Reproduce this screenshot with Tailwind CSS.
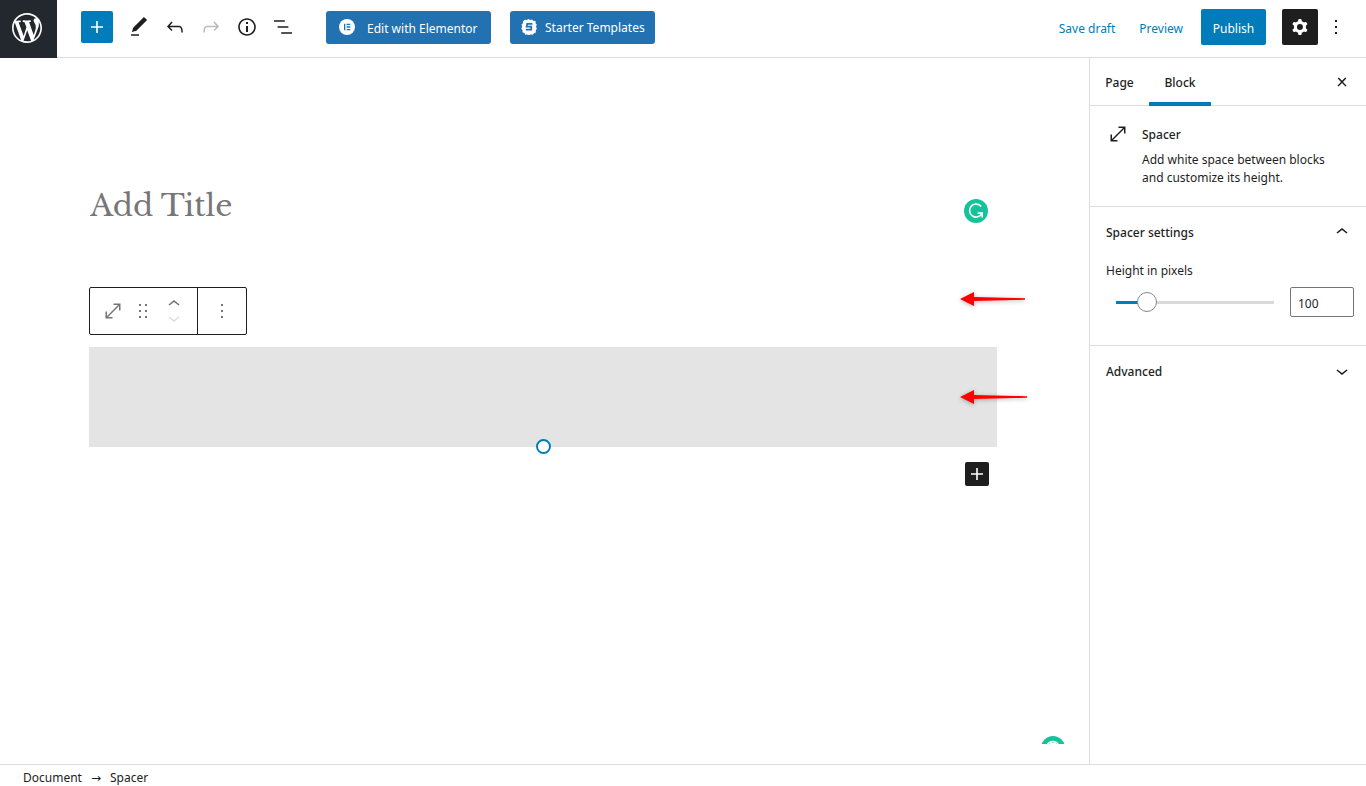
<!DOCTYPE html>
<html lang="en">
<head>
<meta charset="utf-8">
<meta name="viewport" content="width=device-width, initial-scale=1">
<title>Edit Page</title>
<script src="https://cdn.jsdelivr.net/npm/@tailwindcss/browser@4"></script>
</head>
<body class="flex h-screen flex-col overflow-hidden bg-white font-['Segoe_UI','Noto_Sans',sans-serif] text-[12px] text-[#1e1e1e]">

<header class="flex h-[58px] shrink-0 items-start border-b border-[#ddd]">
  <a href="#" aria-label="View pages" class="flex h-[58px] w-[57px] shrink-0 items-center bg-[#23282e] pl-[9px] text-white">
    <svg class="mb-0.5 size-9" viewBox="-2 -2 24 24" fill="currentColor"><path d="M20 10c0-5.51-4.49-10-10-10C4.48 0 0 4.49 0 10c0 5.52 4.48 10 10 10 5.51 0 10-4.48 10-10zM7.78 15.37L4.37 6.22c.55-.02 1.17-.08 1.17-.08.5-.06.44-1.13-.06-1.11 0 0-1.45.11-2.37.11-.18 0-.37 0-.58-.01C4.12 2.69 6.87 1.11 10 1.11c2.33 0 4.45.87 6.05 2.34-.68-.11-1.65.39-1.65 1.58 0 .74.45 1.36.9 2.1.35.61.55 1.36.55 2.46 0 1.49-1.4 5-1.4 5l-3.03-8.37c.54-.02.82-.17.82-.17.5-.05.44-1.25-.06-1.22 0 0-1.44.12-2.38.12-.87 0-2.33-.12-2.33-.12-.5-.03-.56 1.2-.06 1.22l.92.08 1.26 3.41zM17.41 10c.24-.64.74-1.87.43-4.25.7 1.29 1.05 2.71 1.05 4.25 0 3.29-1.73 6.24-4.4 7.78.97-2.59 1.94-5.2 2.92-7.78zM6.1 18.09C3.12 16.65 1.11 13.53 1.11 10c0-1.3.23-2.48.72-3.59C3.25 10.3 4.67 14.2 6.1 18.09zm4.03-6.63l2.58 6.98c-.86.29-1.76.45-2.71.45-.79 0-1.57-.11-2.29-.33.81-2.38 1.62-4.74 2.42-7.1z"/></svg>
  </a>
  <div class="flex h-[54px] flex-1 items-center pl-6">
    <button aria-label="Add block" class="mr-2 flex size-8 items-center justify-center rounded-[2px] bg-[#007cba] text-white"><svg class="size-6" viewBox="0 0 24 24" fill="currentColor"><path d="M18 11.2h-5.2V6h-1.6v5.2H6v1.6h5.2V18h1.6v-5.2H18z"/></svg></button>
    <button aria-label="Tools" class="flex size-9 items-center justify-center"><svg class="size-6" viewBox="0 0 24 24" fill="currentColor"><path d="M20.1 5.1L16.9 2 6.2 12.7l-1.3 4.4 4.5-1.3L20.1 5.1zM4 20.8h8v-1.5H4v1.5z"/></svg></button>
    <button aria-label="Undo" class="flex size-9 items-center justify-center"><svg class="size-6" viewBox="0 0 24 24" fill="currentColor"><path d="M18.3 11.7c-.6-.6-1.4-.9-2.3-.9H6.7l2.9-3.3-1.1-1-4.5 5L8.5 16l1-1-2.7-2.7H16c.5 0 .9.2 1.3.5 1 1 1 3.4 1 4.5v.3h1.5v-.2c0-1.5 0-4.3-1.5-5.7z"/></svg></button>
    <button aria-label="Redo" class="flex size-9 items-center justify-center text-[#bbb]"><svg class="size-6" viewBox="0 0 24 24" fill="currentColor"><path d="M15.6 6.5l-1.1 1 2.9 3.3H8c-.9 0-1.7.3-2.3.9-1.4 1.5-1.4 4.2-1.4 5.6v.2h1.5v-.3c0-1.1 0-3.5 1-4.5.3-.3.7-.5 1.3-.5h9.2L14.5 15l1.1 1.1 4.6-4.6-4.6-5z"/></svg></button>
    <button aria-label="Details" class="flex size-9 items-center justify-center"><svg class="size-6" viewBox="0 0 24 24" fill="currentColor"><path d="M12 3.2c-4.8 0-8.8 3.9-8.8 8.8 0 4.8 3.9 8.8 8.8 8.8 4.8 0 8.8-3.9 8.8-8.8 0-4.8-4-8.8-8.8-8.8zm0 16c-4 0-7.2-3.3-7.2-7.2C4.8 8 8 4.8 12 4.8s7.2 3.3 7.2 7.2c0 4-3.2 7.2-7.2 7.2zM11 17h2v-6h-2v6zm0-8h2V7h-2v2z"/></svg></button>
    <button aria-label="List view" class="flex size-9 items-center justify-center"><svg class="size-6" viewBox="0 0 24 24" fill="currentColor"><path d="M13.8 5.2H3v1.5h10.8V5.2zm-3.6 12v1.5H21v-1.5H10.2zm7.2-6H6.6v1.5h10.8v-1.5z"/></svg></button>
    <button class="ml-[25px] flex h-[33px] w-[165px] items-center gap-3 rounded-[3px] bg-[#2271b1] pl-[13px] whitespace-nowrap text-white">
      <svg class="size-4 shrink-0" viewBox="0 0 16 16"><circle cx="8" cy="8" r="8" fill="#fff"/><path fill="#2271b1" d="M5 4.7h1.3v6.6H5zM7.6 4.7h3.7V6H7.6zM7.6 7.35h3.7v1.3H7.6zM7.6 10h3.7v1.3H7.6z"/></svg>
      <span class="pt-1">Edit with Elementor</span>
    </button>
    <button class="ml-[19px] flex h-[33px] w-[145px] items-center gap-2 rounded-[3px] bg-[#2271b1] pl-[11px] whitespace-nowrap text-white">
      <svg class="size-4 shrink-0" viewBox="0 0 16 16"><path fill="#fff" d="M4 .8l1.8.3L7.5 0l1.7.9 2-.5.9 1.4 2.5.3-.1 2 1.3 1.7-.8 1.9.9 2-1.1 1.6.1 2.3-1.8.6-1.4 1.5-1.9-.3-1.8 1-1.7-1-2.1.3-.8-1.7-2-.8.2-1.9L.3 9.6l.9-1.8-.7-2 1.4-1.5.1-2.1z"/><path fill="none" stroke="#2271b1" stroke-width="1.8" d="M11.4 4.9H6.2L5.6 7.6h4.6v3H4.8"/></svg>
      <span class="pt-0.5">Starter Templates</span>
    </button>
  </div>
  <div class="flex h-[54px] shrink-0 items-center pr-[18px]">
    <button class="mr-6 pt-1 text-[#007cba]">Save draft</button>
    <button class="mr-[18px] pt-1 text-[#007cba]">Preview</button>
    <button class="mr-4 flex h-9 w-[65px] items-center justify-center rounded-[2px] bg-[#007cba] pt-1 text-white">Publish</button>
    <button aria-label="Settings" class="flex size-9 items-center justify-center rounded-[2px] bg-[#1e1e1e] text-white"><svg class="size-6" viewBox="0 0 24 24" fill="currentColor"><path fill-rule="evenodd" d="M10.289 4.836A1 1 0 0111.275 4h1.306a1 1 0 01.987.836l.244 1.466c.787.26 1.503.679 2.108 1.218l1.393-.522a1 1 0 011.216.437l.653 1.13a1 1 0 01-.23 1.273l-1.148.944a6.025 6.025 0 010 2.435l1.149.946a1 1 0 01.23 1.272l-.653 1.13a1 1 0 01-1.216.437l-1.394-.522c-.605.54-1.32.958-2.108 1.218l-.244 1.466a1 1 0 01-.987.836h-1.306a1 1 0 01-.986-.836l-.244-1.466a5.995 5.995 0 01-2.108-1.218l-1.394.522a1 1 0 01-1.217-.436l-.653-1.131a1 1 0 01.23-1.272l1.149-.946a6.026 6.026 0 010-2.435l-1.148-.944a1 1 0 01-.23-1.272l.653-1.131a1 1 0 011.217-.437l1.393.522a5.994 5.994 0 012.108-1.218l.244-1.466zM14.929 12a3 3 0 11-6 0 3 3 0 016 0z"/></svg></button>
    <button aria-label="Options" class="ml-1.5"><svg class="size-6" viewBox="0 0 24 24" fill="currentColor"><path d="M13 19h-2v-2h2v2zm0-6h-2v-2h2v2zm0-6h-2V5h2v2z"/></svg></button>
  </div>
</header>

<div class="flex min-h-0 flex-1">
  <main class="relative min-w-0 flex-1 pt-[120px] pr-[92px] pl-[89px]">
    <input type="text" aria-label="Add title" placeholder="Add Title" class="block h-[54px] w-full pl-px font-['Libre_Baskerville','Liberation_Serif',serif] text-[30px] outline-none placeholder:text-[#777]">
    <div class="mt-[55px] flex h-12 w-[158px] rounded-[2px] border border-[#1e1e1e] text-[#757575]">
      <div class="flex w-[108px] items-center border-r border-[#1e1e1e] pl-[11px]">
        <button aria-label="Spacer"><svg class="size-6" viewBox="0 0 24 24" fill="currentColor"><path d="M7 18h4.5v1.5h-7v-7H6V17L17 6h-4.5V4.5h7v7H18V7L7 18z"/></svg></button>
        <button aria-label="Drag" class="ml-[9px]"><svg class="size-[18px]" viewBox="0 0 18 18" fill="currentColor"><path d="M5 4h2V2H5v2zm6-2v2h2V2h-2zm-6 8h2V8H5v2zm6 0h2V8h-2v2zm-6 6h2v-2H5v2zm6 0h2v-2h-2v2z"/></svg></button>
        <div class="ml-2.5 flex flex-col">
          <button aria-label="Move up" class="flex h-3.5 items-center"><svg class="size-6" viewBox="0 0 24 24" fill="currentColor"><path d="M6.5 12.4L12 8l5.5 4.4-.9 1.2L12 10l-4.5 3.6-1-1.2z"/></svg></button>
          <button aria-label="Move down" class="flex h-3.5 items-center text-[#ddd]"><svg class="size-6" viewBox="0 0 24 24" fill="currentColor"><path d="M17.5 11.6L12 16l-5.5-4.4.9-1.2L12 14l4.5-3.6 1 1.2z"/></svg></button>
        </div>
      </div>
      <button aria-label="More options" class="flex flex-1 items-center justify-center"><svg class="size-6" viewBox="0 0 24 24" fill="currentColor"><path d="M13 19h-2v-2h2v2zm0-6h-2v-2h2v2zm0-6h-2V5h2v2z"/></svg></button>
    </div>
    <div class="relative mt-3 h-[100px] bg-[#e4e4e4]">
      <button aria-label="Resize spacer" class="absolute -bottom-[7px] left-1/2 size-[15px] -translate-x-[7px] rounded-full border-2 border-[#007cba] bg-white"></button>
    </div>
    <div class="mt-[15px] flex justify-end pr-2">
      <button aria-label="Add block" class="flex size-6 items-center justify-center rounded-[2px] bg-[#1e1e1e] text-white"><svg class="size-6" viewBox="0 0 24 24" fill="currentColor"><path d="M18 11.2h-5.2V6h-1.6v5.2H6v1.6h5.2V18h1.6v-5.2H18z"/></svg></button>
    </div>

    <!-- Writing assistant badges -->
    <svg class="absolute top-[141px] right-[101px] size-6" viewBox="0 0 24 24"><circle cx="12" cy="12" r="12" fill="#15c39a"/><path fill="none" stroke="#fff" stroke-width="1.6" d="M17.2 7.6A6.5 6.5 0 1 0 18 14.2M13.6 14.1h4.6v4.4"/></svg>
    <div class="absolute right-6 bottom-5 h-2 w-6 overflow-hidden"><svg class="size-6" viewBox="0 0 24 24"><circle cx="12" cy="12" r="12" fill="#15c39a"/><path fill="none" stroke="#fff" stroke-width="1.6" d="M17.4 8.6A6.5 6.5 0 1 0 18 14.2M9 7.6h6"/></svg></div>

    <!-- Annotation arrows -->
    <svg class="absolute top-[232px] right-[60px] h-[18px] w-[70px] drop-shadow-[0_1px_2px_rgba(0,0,0,0.3)]" viewBox="0 0 70 18"><path fill="#f00" d="M1 9L15 2v5l51 1.2v1.6L15 11v5z"/></svg>
    <svg class="absolute top-[330px] right-[60px] h-[18px] w-[70px] drop-shadow-[0_1px_2px_rgba(0,0,0,0.3)]" viewBox="0 0 70 18"><path fill="#f00" d="M1 9L15 2v5l53 1.2v1.6L15 11v5z"/></svg>
  </main>

  <aside class="w-[277px] shrink-0 border-l border-[#ddd]">
    <div class="flex h-12 items-stretch border-b border-[#ddd] pr-3">
      <button class="w-[59px] pt-0.5 font-medium">Page</button>
      <button class="-mb-px w-[62px] border-b-4 border-[#007cba] pt-[5px] font-medium">Block</button>
      <button aria-label="Close settings" class="ml-auto"><svg class="size-6" viewBox="0 0 24 24" fill="currentColor"><path d="M13 11.9l3.3-3.4-1.1-1-3.2 3.3-3.2-3.3-1.1 1 3.3 3.4-3.5 3.6 1 1L12 13l3.5 3.5 1-1z"/></svg></button>
    </div>
    <section class="flex gap-3 border-b border-[#ddd] pt-4 pr-8 pb-[19px] pl-4">
      <svg class="size-6 shrink-0" viewBox="0 0 24 24" fill="currentColor"><path d="M7 18h4.5v1.5h-7v-7H6V17L17 6h-4.5V4.5h7v7H18V7L7 18z"/></svg>
      <div class="pt-px">
        <h2 class="mb-1 leading-6 font-medium">Spacer</h2>
        <p class="leading-[18px]">Add white space between blocks and customize its height.</p>
      </div>
    </section>
    <section class="border-b border-[#ddd] pb-7">
      <h2><button class="flex h-[50px] w-full items-center justify-between pr-3 pl-4 font-medium"><span class="pt-0.5">Spacer settings</span><svg class="size-6" viewBox="0 0 24 24" fill="currentColor"><path d="M6.5 12.4L12 8l5.5 4.4-.9 1.2L12 10l-4.5 3.6-1-1.2z"/></svg></button></h2>
      <label for="height" class="ml-4 block h-[30px] pt-[5px] leading-[18px]">Height in pixels</label>
      <div class="flex items-center pr-3 pl-4">
        <input type="range" aria-label="Height in pixels" min="1" max="500" value="100" class="mr-1.5 h-[30px] min-w-0 flex-1 appearance-none bg-transparent [&::-webkit-slider-runnable-track]:h-[3px] [&::-webkit-slider-runnable-track]:bg-[linear-gradient(90deg,transparent_10px,#007cba_10px,#007cba_41px,#d7dade_41px,#d7dade_calc(100%-10px),transparent_calc(100%-10px))] [&::-webkit-slider-thumb]:-mt-[9px] [&::-webkit-slider-thumb]:size-5 [&::-webkit-slider-thumb]:appearance-none [&::-webkit-slider-thumb]:rounded-full [&::-webkit-slider-thumb]:border [&::-webkit-slider-thumb]:border-[#7e8993] [&::-webkit-slider-thumb]:bg-white">
        <input id="height" type="number" value="100" class="h-[30px] w-16 appearance-none rounded-[2px] border border-[#757575] pt-0.5 pl-[7px] [&::-webkit-inner-spin-button]:appearance-none">
      </div>
    </section>
    <h2><button class="flex h-[50px] w-full items-center justify-between pr-3 pl-4 font-medium"><span class="pt-0.5">Advanced</span><svg class="size-6" viewBox="0 0 24 24" fill="currentColor"><path d="M17.5 11.6L12 16l-5.5-4.4.9-1.2L12 14l4.5-3.6 1 1.2z"/></svg></button></h2>
  </aside>
</div>

<footer class="h-[22px] shrink-0 border-t border-[#ddd] pl-[23px]">
  <nav aria-label="Block breadcrumb" class="flex items-center gap-[9px] pt-px leading-6">
    <button>Document</button><span class="font-['DejaVu_Sans'] text-[12px]">→</span><button>Spacer</button>
  </nav>
</footer>
</body>
</html>
